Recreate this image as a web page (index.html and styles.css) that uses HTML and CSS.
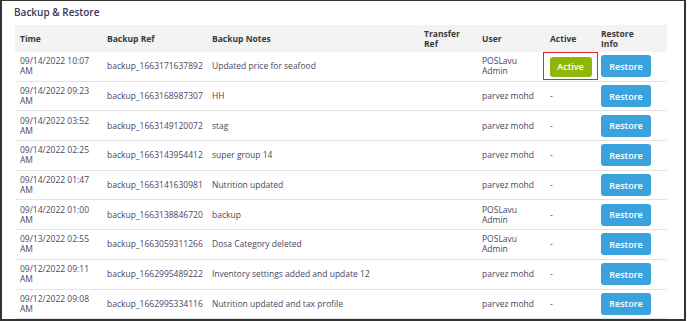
FILE: index.html
```html
<!DOCTYPE html>
<html lang="en">
<head>
    <meta charset="UTF-8">
    <meta name="viewport" content="width=device-width, initial-scale=1.0">
    <title>Backup &amp; Restore</title>
    <link rel="stylesheet" href="styles.css">
</head>
<body>

    <div class="frame">
        <h2 class="title">Backup &amp; Restore</h2>
        <table class="backups">
            <colgroup>
                <col class="c-time">
                <col class="c-ref">
                <col class="c-notes">
                <col class="c-transfer">
                <col class="c-user">
                <col class="c-active">
                <col class="c-restore">
            </colgroup>
            <thead>
                <tr>
                    <th>Time</th>
                    <th>Backup Ref</th>
                    <th>Backup Notes</th>
                    <th>Transfer<br>Ref</th>
                    <th>User</th>
                    <th>Active</th>
                    <th>Restore<br>Info</th>
                </tr>
            </thead>
            <tbody>
                <tr>
                    <td>09/14/2022 10:07 AM</td>
                    <td>backup_1663171637892</td>
                    <td>Updated price for seafood</td>
                    <td></td>
                    <td>POSLavu Admin</td>
                    <td><span class="highlight"><button class="btn btn-active">Active</button></span></td>
                    <td><button class="btn">Restore</button></td>
                </tr>
                <tr>
                    <td>09/14/2022 09:23 AM</td>
                    <td>backup_1663168987307</td>
                    <td>HH</td>
                    <td></td>
                    <td>parvez mohd</td>
                    <td>-</td>
                    <td><button class="btn">Restore</button></td>
                </tr>
                <tr>
                    <td>09/14/2022 03:52 AM</td>
                    <td>backup_1663149120072</td>
                    <td>stag</td>
                    <td></td>
                    <td>parvez mohd</td>
                    <td>-</td>
                    <td><button class="btn">Restore</button></td>
                </tr>
                <tr>
                    <td>09/14/2022 02:25 AM</td>
                    <td>backup_1663143954412</td>
                    <td>super group 14</td>
                    <td></td>
                    <td>parvez mohd</td>
                    <td>-</td>
                    <td><button class="btn">Restore</button></td>
                </tr>
                <tr>
                    <td>09/14/2022 01:47 AM</td>
                    <td>backup_1663141630981</td>
                    <td>Nutrition updated</td>
                    <td></td>
                    <td>parvez mohd</td>
                    <td>-</td>
                    <td><button class="btn">Restore</button></td>
                </tr>
                <tr>
                    <td>09/14/2022 01:00 AM</td>
                    <td>backup_1663138846720</td>
                    <td>backup</td>
                    <td></td>
                    <td>POSLavu Admin</td>
                    <td>-</td>
                    <td><button class="btn">Restore</button></td>
                </tr>
                <tr>
                    <td>09/13/2022 02:55 AM</td>
                    <td>backup_1663059311266</td>
                    <td>Dosa Category deleted</td>
                    <td></td>
                    <td>POSLavu Admin</td>
                    <td>-</td>
                    <td><button class="btn">Restore</button></td>
                </tr>
                <tr>
                    <td>09/12/2022 09:11 AM</td>
                    <td>backup_1662995489222</td>
                    <td>Inventory settings added and update 12</td>
                    <td></td>
                    <td>parvez mohd</td>
                    <td>-</td>
                    <td><button class="btn">Restore</button></td>
                </tr>
                <tr>
                    <td>09/12/2022 09:08 AM</td>
                    <td>backup_1662995334116</td>
                    <td>Nutrition updated and tax profile</td>
                    <td></td>
                    <td>parvez mohd</td>
                    <td>-</td>
                    <td><button class="btn">Restore</button></td>
                </tr>
            </tbody>
        </table>
    </div>

</body>
</html>
```

FILE: styles.css
```css
body {
    margin: 0;
    background-color: white;
    font-family: "Open Sans", Arial, sans-serif;
}

.frame {
    width: 686px;
    height: 321px;
    box-sizing: border-box;
    border: 2px solid #333;
    border-top-width: 1.5px;
    padding: 3px 0 0 12px;
    overflow: hidden;
}

.title {
    margin: 0 0 4px 0;
    font-size: 10px;
    line-height: 17px;
    font-weight: 600;
    color: #3b3658;
}

.backups {
    width: 652px;
    margin-left: 1px;
    border-collapse: collapse;
    table-layout: fixed;
}

.c-time { width: 87px; }
.c-ref { width: 105px; }
.c-notes { width: 212px; }
.c-transfer { width: 58px; }
.c-user { width: 68px; }
.c-active { width: 51px; }
.c-restore { width: 71px; }

.backups th {
    background-color: #f3f3f3;
    height: 27px;
    padding: 0 5px;
    text-align: left;
    vertical-align: middle;
    font-size: 8.5px;
    line-height: 10px;
    font-weight: 700;
    color: #3a3a3a;
}

.backups td {
    height: 28.7px;
    padding: 0 5px;
    border-bottom: 1px solid #e4e4e4;
    vertical-align: middle;
    font-size: 8.5px;
    line-height: 10px;
    color: #4a4662;
}

.btn {
    display: block;
    width: 50px;
    height: 22px;
    padding: 0;
    border: none;
    border-radius: 3px;
    background-color: #3aa2dc;
    color: white;
    font-family: inherit;
    font-size: 9px;
    font-weight: 600;
    cursor: pointer;
}

.btn-active {
    width: 42px;
    height: 20px;
    background-color: #8db80a;
}

.highlight {
    display: inline-block;
    vertical-align: middle;
    border: 1.5px solid #e3262c;
    padding: 3.5px 5.5px 2.5px 5.5px;
    margin: -4px -7px -4px -7px;
}
```
